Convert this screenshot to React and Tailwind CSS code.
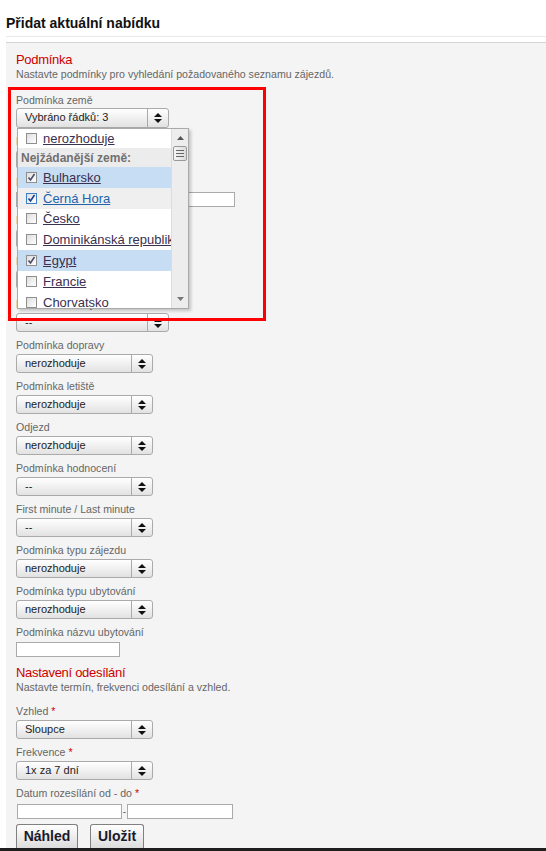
import React from "react";

const countries = [
  { name: "Bulharsko", checked: true, selected: true },
  { name: "Černá Hora", checked: true, hover: true },
  { name: "Česko" },
  { name: "Dominikánská republika" },
  { name: "Egypt", checked: true, selected: true },
  { name: "Francie" },
  { name: "Chorvatsko" },
];

const Arrows = () => (
  <span className="flex w-[21px] flex-col items-center justify-center gap-[2px] border-l border-[#aaa]">
    <svg width="8" height="4" viewBox="0 0 8 4">
      <path d="M0 4 L4 0 L8 4 Z" fill="#111" />
    </svg>
    <svg width="8" height="4" viewBox="0 0 8 4">
      <path d="M0 0 L8 0 L4 4 Z" fill="#111" />
    </svg>
  </span>
);

const Select = ({ value, wide, tall }) => (
  <div
    className={`flex ${tall ? "h-[20px]" : "h-[19px]"} ${wide ? "w-[153px]" : "w-[137px]"} rounded-[3px] border border-[#aaa] bg-linear-to-b from-white to-[#e2e2e2] text-[11px] text-[#222]`}
  >
    <span className="flex-1 truncate pl-[8px] leading-[17px]">{value}</span>
    <Arrows />
  </div>
);

const Field = ({ label, req, children, top = "mt-[7px]", gap = "mt-[2px]" }) => (
  <div className={top}>
    <div className="text-[10.6px] leading-[13px] text-[#666]">
      {label}
      {req && <span className="text-[#cc0000]"> *</span>}
    </div>
    <div className={gap}>{children}</div>
  </div>
);

const TextInput = ({ w }) => (
  <div className={`h-[15px] ${w} border border-[#aaa] bg-white`} />
);

const Check = ({ checked, blue }) => (
  <span
    className={`flex h-[11px] w-[11px] shrink-0 items-center justify-center border ${blue ? "border-[#3d7fc4]" : "border-[#8f8f8f]"} bg-linear-to-br from-[#dedede] to-white`}
  >
    {checked && (
      <svg width="9" height="9" viewBox="0 0 9 9">
        <path d="M1.5 4.5 L3.5 7 L7.5 1" fill="none" stroke={blue ? "#1b3f8f" : "#4b4b6b"} strokeWidth="1.6" />
      </svg>
    )}
  </span>
);

// rozbalený seznam zemí
const CountryList = () => (
  <div className="absolute left-[1px] top-full z-10 flex h-[181px] w-[172px] border border-[#aaa] bg-white shadow-[2px_2px_3px_rgba(0,0,0,0.2)]">
    <div className="flex-1 overflow-hidden">
      <div className="flex h-[19px] items-center pl-[8px]">
        <Check />
        <span className="ml-[6px] whitespace-nowrap text-[13px] leading-[15px] text-[#3a3050] underline">nerozhoduje</span>
      </div>
      <div className="flex h-[19px] items-center bg-[#ececec] pl-[3px] text-[12px] font-bold text-[#707070]">
        Nejžádanější země:
      </div>
      {countries.map((c) => (
        <div
          key={c.name}
          className={`flex h-[20.8px] items-center pl-[8px] ${c.selected ? "bg-[#c7ddf3]" : c.hover ? "bg-[#efefef]" : "bg-white"}`}
        >
          <Check checked={c.checked} blue={c.hover} />
          <span
            className={`ml-[6px] whitespace-nowrap text-[13px] leading-[15px] underline ${c.hover ? "text-[#2164ad]" : "text-[#3a3050]"}`}
          >
            {c.name}
          </span>
        </div>
      ))}
    </div>
    <div className="relative w-[17px] border-l border-[#dcdcdc] bg-[#ededed]">
      <svg className="absolute left-[5px] top-[7px]" width="7" height="4" viewBox="0 0 7 4">
        <path d="M0 4 L3.5 0 L7 4 Z" fill="#555" />
      </svg>
      <div className="absolute left-[1px] top-[17px] flex h-[15px] w-[14px] flex-col items-center justify-center gap-[2px] rounded-[2px] border border-[#999] bg-linear-to-r from-[#f6f6f6] to-[#dcdcdc]">
        <span className="h-px w-[8px] bg-[#666]" />
        <span className="h-px w-[8px] bg-[#666]" />
        <span className="h-px w-[8px] bg-[#666]" />
      </div>
      <svg className="absolute bottom-[7px] left-[5px]" width="7" height="4" viewBox="0 0 7 4">
        <path d="M0 0 L7 0 L3.5 4 Z" fill="#777" />
      </svg>
    </div>
  </div>
);

const Button = ({ children, w }) => (
  <button
    type="button"
    className={`h-[24px] ${w} rounded-t-[3px] border border-b-0 border-[#808080] bg-linear-to-b from-white to-[#dcdcdc] text-[14px] font-bold text-[#1a1a2a]`}
  >
    {children}
  </button>
);

export default function App() {
  return (
    <div className="min-h-[851px] bg-white font-['Liberation_Sans',Arial,sans-serif]">
      <div className="ml-[6px]">
        <h1 className="pt-[13px] pb-[3px] text-[14px] font-bold leading-[20px] text-[#111]">
          Přidat aktuální nabídku
        </h1>
        <div className="h-px bg-[#e9e9e9]" />

        <div className="relative mt-[5px] border-t border-[#d5d5d5] bg-[#f4f4f4] pl-[10px] pt-[9px]">
          {/* červené zvýraznění */}
          <div className="pointer-events-none absolute left-[2px] top-[44px] h-[234px] w-[258px] border-[3px] border-[#ff0000]" />

          <h2 className="text-[13px] leading-[16px] tracking-[-0.3px] text-[#cc0000]">Podmínka</h2>
          <p className="text-[10.6px] leading-[13px] text-[#666]">
            Nastavte podmínky pro vyhledání požadovaného seznamu zájezdů.
          </p>

          <Field label="Podmínka země" top="mt-[13px]" gap="mt-[1px]">
            <div className="relative w-[153px]">
              <Select value="Vybráno řádků: 3" wide tall />
              <CountryList />
            </div>
          </Field>
          <Field label="Podmínka oblasti">
            <Select value="nerozhoduje" wide />
          </Field>
          <Field label="Název destinace" gap="mt-[3px]">
            <TextInput w="w-[219px]" />
          </Field>
          <Field label="Podmínka termínu">
            <Select value="nerozhoduje" wide />
          </Field>
          <Field label="Podmínka délky">
            <Select value="nerozhoduje" wide />
          </Field>
          <Field label="Podmínka stravy" top="mt-[9px]">
            <Select value="--" wide />
          </Field>

          <Field label="Podmínka dopravy">
            <Select value="nerozhoduje" />
          </Field>
          <Field label="Podmínka letiště">
            <Select value="nerozhoduje" />
          </Field>
          <Field label="Odjezd">
            <Select value="nerozhoduje" />
          </Field>
          <Field label="Podmínka hodnocení">
            <Select value="--" />
          </Field>
          <Field label="First minute / Last minute">
            <Select value="--" />
          </Field>
          <Field label="Podmínka typu zájezdu">
            <Select value="nerozhoduje" />
          </Field>
          <Field label="Podmínka typu ubytování">
            <Select value="nerozhoduje" />
          </Field>
          <Field label="Podmínka názvu ubytování" gap="mt-[3px]">
            <TextInput w="w-[104px]" />
          </Field>

          <h2 className="mt-[8px] text-[13px] leading-[16px] tracking-[-0.3px] text-[#cc0000]">Nastavení odesílání</h2>
          <p className="text-[10.6px] leading-[13px] text-[#666]">
            Nastavte termín, frekvenci odesílání a vzhled.
          </p>

          <Field label="Vzhled" req top="mt-[11px]">
            <Select value="Sloupce" />
          </Field>
          <Field label="Frekvence" req>
            <Select value="1x za 7 dní" />
          </Field>
          <Field label="Datum rozesílání od - do" req gap="mt-[4px]">
            <div className="ml-px flex items-center">
              <TextInput w="w-[105px]" />
              <span className="w-[5px] text-center text-[10px] leading-[15px] text-[#666]">-</span>
              <TextInput w="w-[106px]" />
            </div>
          </Field>

          <div className="mt-[5px] flex gap-[12px]">
            <Button w="w-[62px]">Náhled</Button>
            <Button w="w-[54px]">Uložit</Button>
          </div>
        </div>
      </div>
      <div className="h-[3px] bg-[#1e1e1e]" />
    </div>
  );
}
